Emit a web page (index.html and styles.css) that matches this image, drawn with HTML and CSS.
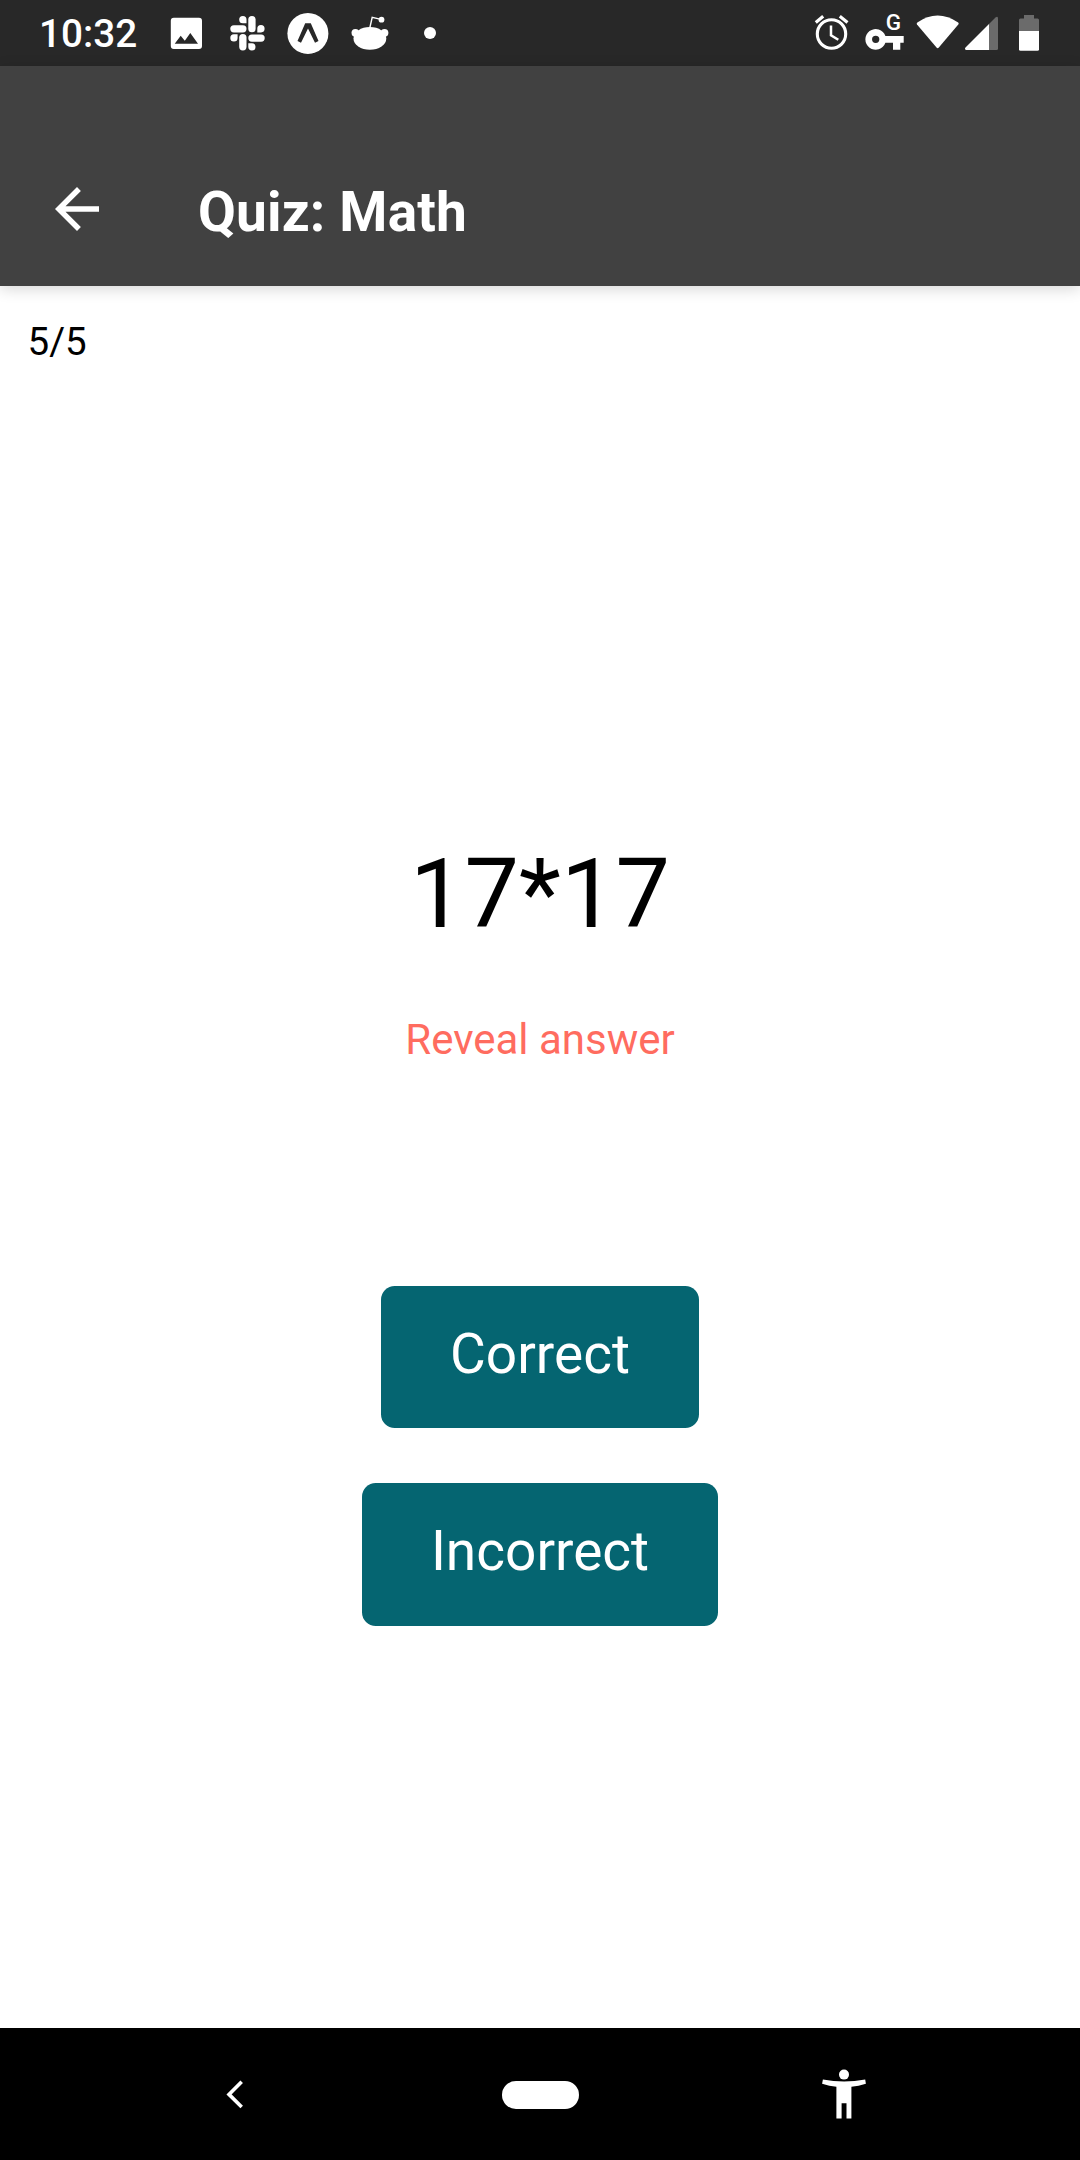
FILE: index.html
```html
<!DOCTYPE html>
<html lang="en">
<head>
<meta charset="utf-8">
<title>Quiz: Math</title>
<link rel="stylesheet" href="styles.css">
</head>
<body>
<div class="screen">
  <div class="status-bar">
    <span class="clock">10:32</span>
    <div class="notifications">
      <svg width="32" height="66" viewBox="170 0 32 66"><path fill="#fff" fill-rule="evenodd" d="M173.800 17.700H199a3 3 0 0 1 3 3V46a3 3 0 0 1-3 3H173.800a3 3 0 0 1-3-3V20.700a3 3 0 0 1 3-3zM174.700 43.700H198L190.300 33L184.800 40.700L180.700 35.700z"/></svg>
      <svg width="36" height="66" viewBox="230 0 36 66" fill="#fff">
        <rect x="248.300" y="16" width="7.300" height="16.300" rx="3.600"/>
        <rect x="230.300" y="25.200" width="16.200" height="7.200" rx="3.600"/>
        <rect x="239.200" y="34" width="7.300" height="16.400" rx="3.600"/>
        <rect x="248.300" y="34.500" width="16.400" height="7.200" rx="3.600"/>
        <path d="M246.500 23.300H242.900A3.650 3.650 0 1 1 246.500 19.600zM257.300 32.400V28.800A3.650 3.650 0 1 1 261 32.400zM248.300 43.300H252A3.600 3.600 0 1 1 248.300 47zM237.600 34.300V38A3.650 3.650 0 1 1 234 34.300z"/>
      </svg>
      <svg width="42" height="66" viewBox="287.500 0 42 66"><circle cx="308.400" cy="33.400" r="20.500" fill="#fff"/><path fill="#282828" d="M305.700 23.200H311.300L319 41L315.500 42.800L308.500 28.500L301.500 42.800L298 41z"/></svg>
      <svg width="38" height="66" viewBox="350.500 0 38 66" fill="#fff"><ellipse cx="369.400" cy="38.400" rx="16.400" ry="11.300"/><circle cx="354.900" cy="32.800" r="3.900"/><circle cx="384" cy="32.800" r="3.900"/><path d="M369.300 28L371.700 17.300L380.500 19.400" fill="none" stroke="#fff" stroke-width="1.400"/><circle cx="381" cy="19.700" r="2.900"/></svg>
      <svg width="12" height="66" viewBox="424 0 12 66"><circle cx="430" cy="33" r="6" fill="#fff"/></svg>
    </div>
    <div class="system-icons">
      <svg width="36" height="66" viewBox="814 0 36 66" fill="none" stroke="#fff"><circle cx="831.500" cy="34" r="14.200" stroke-width="3.100"/><path stroke-width="3.200" d="M815.800 22.500L823.200 16.300M839.800 16.300L847.500 22.500"/><path stroke-width="2.500" d="M831 25.500V35.300L838.300 39.700"/></svg>
      <svg width="40" height="66" viewBox="865 0 40 66" fill="#fff"><path fill-rule="evenodd" d="M885.400 36H903.700V42.700H900.300V49.700H893V42.700H885.400A10.300 10.300 0 1 1 885.400 36zM875.700 35.700A3.650 3.650 0 1 0 875.700 43A3.650 3.650 0 1 0 875.700 35.700z"/><text class="vpn-letter" x="885.800" y="29.900">G</text></svg>
      <svg width="44" height="66" viewBox="916 0 44 66"><path fill="#fff" d="M917.300 22.400Q937.500 8.600 958.200 22.400Q959.200 23.200 958.300 24.400L938.800 47.600Q937.700 48.900 936.500 47.600L917 24.400Q916.200 23.200 917.300 22.400z"/></svg>
      <svg width="34" height="66" viewBox="965 0 34 66"><path fill="#6b6b6b" d="M989 24L995.500 17.500Q998 15.800 998 18.500V48.500Q998 50 996.500 50H989z"/><path fill="#fff" d="M989 24V50H966Q964.200 49.300 965.500 47.500z"/></svg>
      <svg width="20" height="66" viewBox="1019 0 20 66"><path fill="#6b6b6b" d="M1024 15H1034V18.500H1037.500Q1039 18.500 1039 20V31H1019V20Q1019 18.500 1020.500 18.500H1024z"/><path fill="#fff" d="M1019 31H1039V49.200Q1039 50.700 1037.500 50.700H1020.500Q1019 50.700 1019 49.200z"/></svg>
    </div>
  </div>
  <header class="app-bar">
    <svg width="66" height="66" viewBox="0 0 24 24"><path fill="#fff" d="M20 11H7.830l5.590-5.590L12 4l-8 8 8 8 1.410-1.410L7.830 13H20v-2z"/></svg>
    <h1 class="title">Quiz: Math</h1>
  </header>
  <main class="quiz">
    <div class="progress">5/5</div>
    <div class="question">17*17</div>
    <div class="reveal">Reveal answer</div>
    <div class="actions">
      <div class="button correct">Correct</div>
      <div class="button incorrect">Incorrect</div>
    </div>
  </main>
  <nav class="nav-bar">
    <svg width="18" height="30" viewBox="226 2079 18 30"><path fill="none" stroke="#fff" stroke-width="3.600" d="M241.700 2081.800L229 2094.400L241.700 2107"/></svg>
    <div class="home-pill"></div>
    <svg width="44" height="50" viewBox="822 2069 44 50" fill="#fff"><circle cx="844" cy="2074.600" r="5"/><path d="M822.900 2079.500Q844 2083.500 865.200 2079.500L865.900 2083.800Q858.500 2086.100 851.400 2086.700V2118.500H846.500V2103.300H841.600V2118.500H836.400V2086.700Q829.500 2086.100 822.100 2083.800z"/></svg>
  </nav>
</div>
</body>
</html>
```
FILE: styles.css
```css
body {
  margin: 0;
  font-family: Roboto, "Liberation Sans", sans-serif;
}

svg {
  display: block;
  flex: none;
}

.screen {
  display: flex;
  flex-direction: column;
  width: 1080px;
  height: 2160px;
  overflow: hidden;
  background: #fff;
  color: #000;
}

.status-bar {
  display: flex;
  align-items: center;
  box-sizing: border-box;
  height: 66px;
  flex: none;
  padding: 0 41px 0 39px;
  background: #282828;
  color: #fff;
}

.clock {
  width: 131px;
  font-size: 38.7px;
  line-height: 66px;
  font-weight: 500;
  padding-top: 2px;
}

.notifications {
  display: flex;
}

.notifications svg:nth-child(2) { margin-left: 28px; }
.notifications svg:nth-child(3) { margin-left: 21px; }
.notifications svg:nth-child(4) { margin-left: 21.5px; }
.notifications svg:nth-child(5) { margin-left: 35.5px; }

.system-icons {
  display: flex;
  margin-left: auto;
}

.system-icons svg:nth-child(2) { margin-left: 15px; }
.system-icons svg:nth-child(3) { margin-left: 11px; }
.system-icons svg:nth-child(4) { margin-left: 5px; }
.system-icons svg:nth-child(5) { margin-left: 20px; }

.vpn-letter {
  font-size: 22.5px;
  font-weight: 500;
}

.app-bar {
  display: flex;
  align-items: center;
  gap: 88px;
  box-sizing: border-box;
  height: 220px;
  flex: none;
  padding: 66px 44px 0;
  background: #414141;
  color: #fff;
  box-shadow: 0 3px 14px rgba(0, 0, 0, 0.16);
}

.title {
  margin: 0;
  padding-top: 5px;
  font-size: 55px;
  line-height: 64px;
  font-weight: 700;
  letter-spacing: 0.15px;
}

.quiz {
  display: flex;
  flex-direction: column;
  align-items: center;
  flex: 1;
}

.progress {
  align-self: flex-start;
  margin: 33px 0 0 27.5px;
  font-size: 38.5px;
  line-height: 46px;
}

.question {
  margin-top: 472px;
  font-size: 97px;
  line-height: 114px;
}

.reveal {
  margin-top: 64px;
  font-size: 42px;
  line-height: 50px;
  color: #ff6c5f;
}

.actions {
  display: flex;
  flex-direction: column;
  align-items: center;
  gap: 55px;
  margin-top: 221px;
}

.button {
  box-sizing: border-box;
  height: 142px;
  padding-top: 35px;
  border-radius: 13.75px;
  background: #056571;
  color: #fff;
  font-size: 55px;
  line-height: 66px;
  text-align: center;
}

.correct { width: 318px; }
.incorrect { width: 356px; height: 143px; }

.nav-bar {
  display: flex;
  align-items: center;
  justify-content: space-between;
  box-sizing: border-box;
  height: 132px;
  flex: none;
  padding: 0 214px 0 226px;
  background: #000;
}

.home-pill {
  width: 77px;
  height: 28px;
  margin: 1px 0 0 14px;
  border-radius: 14px;
  background: #fff;
}
```
